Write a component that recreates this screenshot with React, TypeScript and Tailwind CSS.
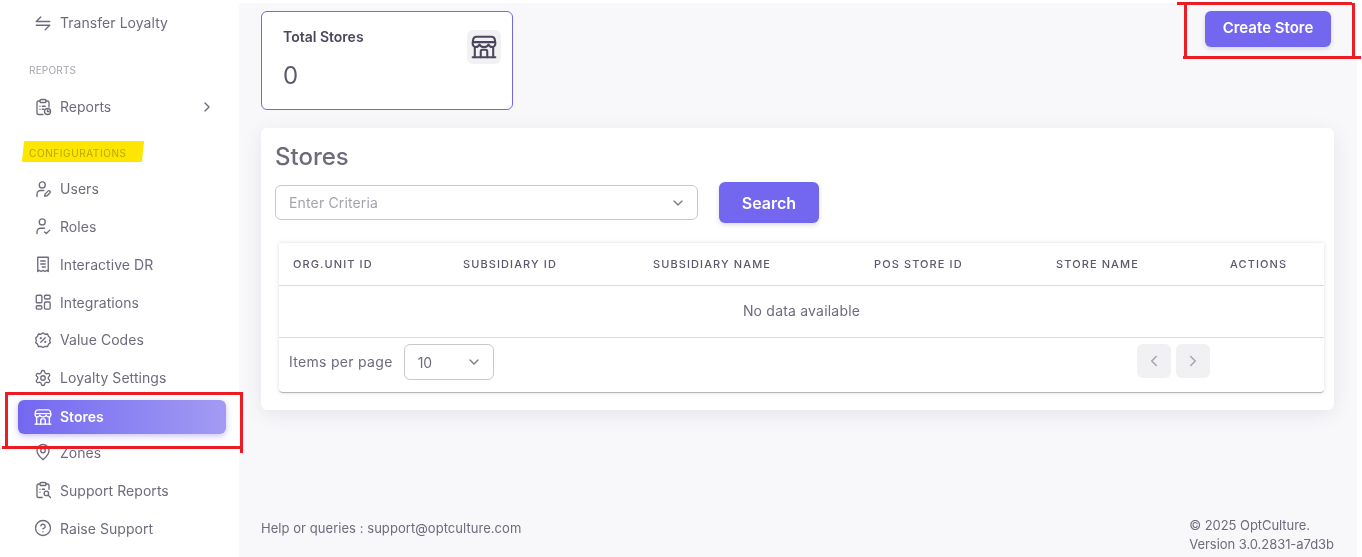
import React from "react";
import { ChevronRight, ChevronLeft, ChevronDown, CircleHelp, Settings, MapPin } from "lucide-react";

const S = { fill: "none", stroke: "currentColor", strokeWidth: 1.8, strokeLinecap: "round" as const, strokeLinejoin: "round" as const };

function Ic({ children, size = 18 }: { children: React.ReactNode; size?: number }) {
  return (
    <svg width={size} height={size} viewBox="0 0 24 24" {...S}>
      {children}
    </svg>
  );
}

const StoreIcon = ({ size = 18, w = 1.9 }: { size?: number; w?: number }) => (
  <svg width={size} height={size} viewBox="0 0 24 24" fill="none" stroke="currentColor" strokeWidth={w} strokeLinecap="round" strokeLinejoin="round">
    <path d="M1.500 21.500h21" />
    <path d="M3.500 12v9.500M20.500 12v9.500" />
    <path d="M5 2.500h14c1.600 0 2.700 1.100 3 2.600l.5 3.400c.2 2-1.200 3.500-3 3.500-1.500 0-2.700-.9-3.300-2.300-.6 1.400-2.200 2.300-4.200 2.300s-3.600-.9-4.200-2.300C7.200 11.100 6 12 4.500 12c-1.800 0-3.200-1.500-3-3.500L2 5.100C2.300 3.600 3.400 2.500 5 2.500Z" />
    <path d="M2 7.500h20" />
    <path d="M9 21.500V16a1.500 1.500 0 0 1 1.500-1.500h3A1.500 1.500 0 0 1 15 16v5.500" />
  </svg>
);

const Transfer = () => (
  <Ic>
    <path d="M9 4l-6 6h18" />
    <path d="M3 15h18l-6 6" />
  </Ic>
);
const ReportsIc = () => (
  <Ic>
    <path d="M8 4H6a2 2 0 0 0-2 2v14a2 2 0 0 0 2 2h6" />
    <path d="M16 4h2a2 2 0 0 1 2 2v6" />
    <rect x="8" y="2" width="8" height="4" rx="1.500" />
    <path d="M8 11h.01M11 11h4M8 15h.01M11 15h2" />
    <circle cx="18" cy="18" r="4" />
    <path d="M18 16v2h2" />
  </Ic>
);
const UsersIc = () => (
  <Ic>
    <circle cx="11" cy="6.500" r="4" />
    <path d="M4 22v-3a5 5 0 0 1 5-5h4" />
    <path d="M14 21.500l1-3 4-4c1-1 3.500 1 2.500 2.500l-4 4Z" />
  </Ic>
);
const RolesIc = () => (
  <Ic>
    <circle cx="11" cy="6.500" r="4" />
    <path d="M4 22v-2a5 5 0 0 1 5-5h5" />
    <path d="M14 20l2.500 2 4.500-4.500" />
  </Ic>
);
const DrIc = () => (
  <Ic>
    <path d="M5 3h14v19l-2-1.500-2.500 1.500-2.500-1.500L9.500 22 7 20.500 5 22Z" />
    <path d="M9 8h6M9 12h6M11 16h4" />
  </Ic>
);
const IntegrationsIc = () => (
  <Ic>
    <rect x="3" y="3" width="7.500" height="10" rx="1.500" />
    <rect x="14" y="3" width="7.500" height="5" rx="1.500" />
    <rect x="3" y="17" width="7.500" height="4.500" rx="1.500" />
    <rect x="14" y="12" width="7.500" height="9.500" rx="1.500" />
  </Ic>
);
const ValueIc = () => (
  <Ic>
    <path d="M12 2.500l2.800 1.800 3.300-.3 1.200 3.100 2.500 2.200-1 3.200 1 3-2.500 2.200-1.200 3-3.300-.2L12 22l-2.800-1.500-3.300.2-1.200-3-2.500-2.200 1-3-1-3.200 2.500-2.200L5.900 4l3.300.3Z" />
    <path d="M9 15l6-6" />
    <circle cx="9" cy="9.500" r=".6" />
    <circle cx="15" cy="14.500" r=".6" />
  </Ic>
);
const SupportReportsIc = () => (
  <Ic>
    <path d="M8 4H6a2 2 0 0 0-2 2v14a2 2 0 0 0 2 2h5" />
    <path d="M16 4h2a2 2 0 0 1 2 2v5" />
    <rect x="8" y="2" width="8" height="4" rx="1.500" />
    <path d="M8 11h.01M11 11h3M8 15h.01" />
    <circle cx="16.500" cy="16.500" r="3" />
    <path d="M19 19l3 3" />
  </Ic>
);

type Item = { label: string; icon: React.ReactNode };

const top: Item[] = [
  { label: "Users", icon: <UsersIc /> },
  { label: "Roles", icon: <RolesIc /> },
  { label: "Interactive DR", icon: <DrIc /> },
  { label: "Integrations", icon: <IntegrationsIc /> },
  { label: "Value Codes", icon: <ValueIc /> },
  { label: "Loyalty Settings", icon: <Settings size={18} strokeWidth={1.8} /> },
];
const bottom: Item[] = [
  { label: "Zones", icon: <MapPin size={18} strokeWidth={1.8} /> },
  { label: "Support Reports", icon: <SupportReportsIc /> },
  { label: "Raise Support", icon: <CircleHelp size={18} strokeWidth={1.8} /> },
];

function Row({ item }: { item: Item }) {
  return (
    <div className="flex h-[37.8px] items-center gap-[8px] pl-[34px] text-[#6f6b7d]">
      <span className="flex w-[18px] justify-center">{item.icon}</span>
      <span className="text-[14px] tracking-[0.05px]">{item.label}</span>
    </div>
  );
}

const cols = ["ORG.UNIT ID", "SUBSIDIARY ID", "SUBSIDIARY NAME", "POS STORE ID", "STORE NAME", "ACTIONS"];

export default function App() {
  return (
    <div className="relative flex h-[557px] w-[1362px] overflow-hidden bg-white pr-[5px] pt-[3px] font-['Inter',sans-serif]">
      <aside className="-mt-[3px] w-[239px] shrink-0 bg-white">
        <div className="pt-[4px]">
          <Row item={{ label: "Transfer Loyalty", icon: <Transfer /> }} />
        </div>
        <div className="mt-[21px] pl-[29px] text-[10px] tracking-[0.2px] text-[#a5a3ae]">REPORTS</div>
        <div className="mt-[10px] flex h-[38px] items-center justify-between pl-[34px] pr-[24px] text-[#6f6b7d]">
          <span className="flex items-center gap-[8px]">
            <ReportsIc />
            <span className="text-[14px]">Reports</span>
          </span>
          <ChevronRight size={16} />
        </div>
        <div className="mt-[19px] pl-[29px] text-[10px] leading-[16px] tracking-[0.6px] text-[#b6bc10]">CONFIGURATIONS</div>
        <div className="mt-[9px]">
          {top.map((i) => (
            <Row key={i.label} item={i} />
          ))}
        </div>
        <div className="ml-[18px] mr-[13px] mt-[3px] flex h-[34px] items-center gap-[8px] rounded-md bg-gradient-to-r from-[#7367f0] to-[#a39bf3] pl-[16px] text-white shadow-[0_2px_6px_rgba(115,103,240,0.4)]">
          <StoreIcon size={18} />
          <span className="text-[14px] font-semibold">Stores</span>
        </div>
        <div>
          {bottom.map((i) => (
            <Row key={i.label} item={i} />
          ))}
        </div>
      </aside>

      <main className="flex min-w-0 flex-1 flex-col bg-[#f8f7fa] pl-[22px] pr-[23px] pt-[8px]">
        <div className="flex items-start justify-between">
          <div className="flex h-[99px] w-[252px] items-start justify-between rounded-md border border-[#7367f0] bg-white pl-[21px] pr-[11px] pt-[17px]">
            <div>
              <div className="text-[14px] font-semibold leading-[16px] text-[#4b465c]">Total Stores</div>
              <div className="mt-[16px] text-[24px] leading-[30px] text-[#5d596c]">0</div>
            </div>
            <div className="mt-[1px] flex h-[34px] w-[34px] items-center justify-center rounded-md bg-[#f1f0f2] text-[#4b465c]">
              <StoreIcon size={26} w={1.9} />
            </div>
          </div>
          <button className="mr-[3px] h-[36px] w-[126px] rounded-md bg-[#7367f0] pb-[2px] text-[15px] font-semibold text-white shadow-[0_2px_4px_rgba(165,163,174,0.4)]">
            Create Store
          </button>
        </div>

        <section className="mt-[18px] h-[282px] rounded-md bg-white px-[14px] pt-[14px] shadow-[0_4px_18px_rgba(75,70,92,0.1)]">
          <h1 className="text-[24px] font-medium leading-[30px] text-[#6f6b7d]">Stores</h1>
          <div className="mt-[10px] flex items-center gap-[21px]">
            <div className="flex h-[35px] w-[423px] items-center justify-between rounded-md border border-[#c9c8ce] pl-[13px] pr-[11px]">
              <span className="text-[14px] tracking-[0.15px] text-[#a5a3ae]">Enter Criteria</span>
              <ChevronDown size={16} className="text-[#7d7a88]" />
            </div>
            <button className="h-[41px] w-[100px] rounded-md bg-[#7367f0] text-[16px] font-semibold text-white shadow-[0_2px_4px_rgba(165,163,174,0.4)]">
              Search
            </button>
          </div>

          <div className="ml-[4px] mr-[-4px] mt-[20px] h-[150px] w-[1045px] rounded-b-sm border-b border-[#b5b4ba] bg-white shadow-[0_0_4px_rgba(75,70,92,0.18)]">
            <div className="grid h-[43px] grid-cols-[170px_190px_221px_182px_174px_1fr] items-center border-b border-[#dbdade] pl-[14px]">
              {cols.map((c) => (
                <div key={c} className="text-[11px] font-medium tracking-[1.1px] text-[#5d596c]">
                  {c}
                </div>
              ))}
            </div>
            <div className="flex h-[52px] items-center justify-center border-b border-[#dbdade] pb-[3px] text-[14px] tracking-[0.2px] text-[#6f6b7d]">
              No data available
            </div>
            <div className="flex h-[54px] items-center justify-between pb-[8px] pl-[10px] pr-[114px]">
              <div className="flex items-center gap-[11px]">
                <span className="text-[14px] tracking-[0.3px] text-[#6f6b7d]">Items per page</span>
                <div className="mt-[2px] flex h-[36px] w-[90px] items-center justify-between rounded-md border border-[#c9c8ce] pl-[13px] pr-[11px] text-[#6f6b7d]">
                  <span className="text-[14px]">10</span>
                  <ChevronDown size={16} className="text-[#7d7a88]" />
                </div>
              </div>
              <div className="flex gap-[5px]">
                <div className="flex h-[34px] w-[34px] items-center justify-center rounded-md bg-[#f1f0f2] text-[#a5a3ae]">
                  <ChevronLeft size={18} />
                </div>
                <div className="flex h-[34px] w-[34px] items-center justify-center rounded-md bg-[#f1f0f2] text-[#a5a3ae]">
                  <ChevronRight size={18} />
                </div>
              </div>
            </div>
          </div>
        </section>

        <footer className="mt-auto flex items-end justify-between pb-[3px] text-[13px] leading-[19px] text-[#6f6b7d]">
          <span className="mb-[16px] tracking-[0.05px]">Help or queries : support@optculture.com</span>
          <div className="tracking-[-0.05px]">
            <div>© 2025 OptCulture.</div>
            <div>Version 3.0.2831-a7d3b</div>
          </div>
        </footer>
      </main>

      {/* hand-drawn annotations lying over the page */}
      <div className="absolute left-[23px] top-[141px] h-[21px] w-[120px] -skew-x-6 bg-[#ffe600] mix-blend-multiply" />

      <div className="absolute left-[7px] top-[392px] h-[3px] w-[235px] bg-[#ec1c24]" />
      <div className="absolute left-[5px] top-[392px] h-[57px] w-[3px] bg-[#ec1c24]" />
      <div className="absolute left-[2px] top-[446px] h-[3px] w-[240px] bg-[#ec1c24]" />
      <div className="absolute left-[240px] top-[392px] h-[61px] w-[3px] bg-[#ec1c24]" />

      <div className="absolute left-[1177px] top-[2px] h-[3px] w-[175px] bg-[#ec1c24]" />
      <div className="absolute left-[1184px] top-[3px] h-[56px] w-[3px] bg-[#ec1c24]" />
      <div className="absolute left-[1183px] top-[56px] h-[3px] w-[178px] bg-[#ec1c24]" />
      <div className="absolute left-[1352px] top-[3px] h-[55px] w-[3px] bg-[#ec1c24]" />
    </div>
  );
}
